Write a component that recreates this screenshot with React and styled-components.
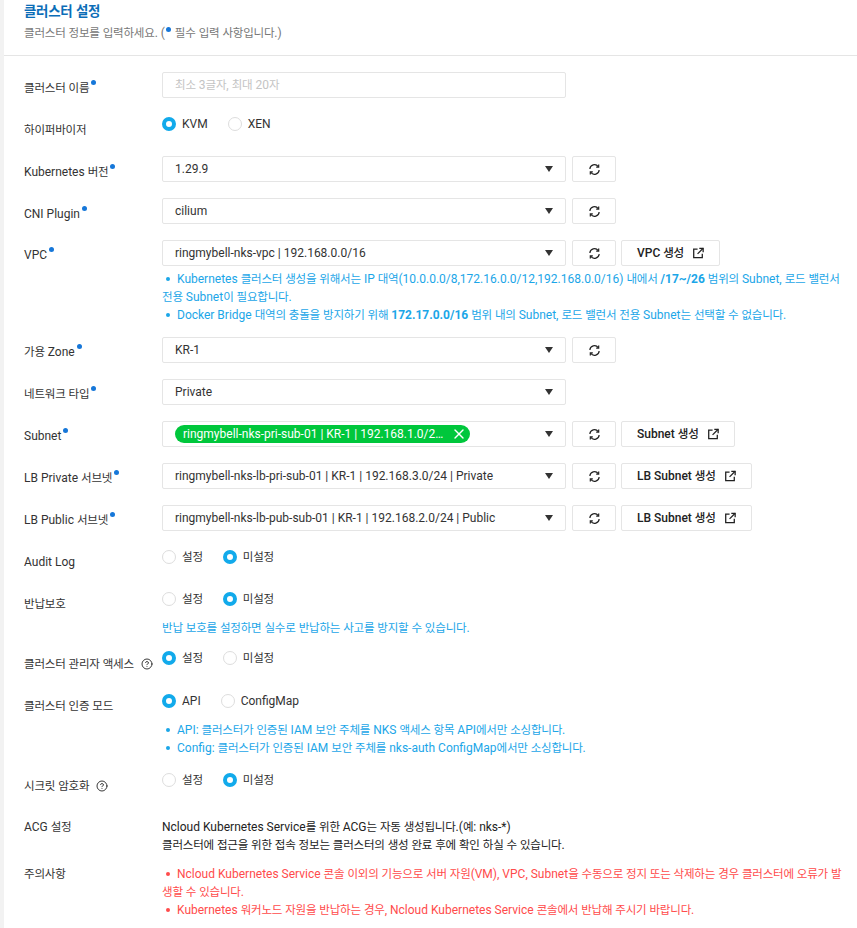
import styled, { createGlobalStyle } from "styled-components";
import { CircleHelp, X } from "lucide-react";

const GlobalStyle = createGlobalStyle`
  html, body {
    margin: 0;
    height: 928px;
    overflow: hidden;
    background: #f2f2f2;
  }
  * {
    box-sizing: border-box;
  }
`;

const Panel = styled.div`
  margin-left: 4px;
  min-height: 928px;
  background: #fff;
  color: #333;
  font: 12px/18px Roboto, "Noto Sans CJK KR", sans-serif;
`;
const Header = styled.div`
  height: 56px;
  padding: 2px 20px 0;
  border-bottom: 1px solid #e5e5e5;
`;
const Title = styled.h2`
  margin: 0;
  height: 18px;
  font-size: 14px;
  line-height: 18px;
  font-weight: 700;
  color: #0b6db7;
`;
const Subtitle = styled.p`
  margin: 4px 0 0;
  color: #777;
`;
const HeaderDot = styled.i`
  display: inline-block;
  width: 5px;
  height: 5px;
  margin: 0 1px 5px -2px;
  border-radius: 50%;
  background: #1677d9;
`;
// hangul runs in the reference are narrower than the latin text around them
const Ko = styled.span`
  font-size: 0.96em;
  letter-spacing: -0.018em;
`;
const Form = styled.div`
  padding: 16px 0 0 20px;
`;
const Row = styled.div`
  display: grid;
  grid-template-columns: 138px 1fr;
  min-height: 26px;
  margin-bottom: ${(p) => p.$gap ?? 16}px;
`;
const Label = styled.div`
  display: flex;
  align-items: flex-start;
  padding-top: ${(p) => (p.$raised ? 6 : 7)}px;
  white-space: nowrap;
`;
const Required = styled.i`
  flex: none;
  width: 5px;
  height: 5px;
  margin: 1px 0 0 2px;
  border-radius: 50%;
  background: #1677d9;
`;
const HelpIcon = styled(CircleHelp)`
  flex: none;
  margin: 3px 0 0 7px;
  color: #222;
`;
const Controls = styled.div`
  display: flex;
  gap: 6px;
`;
const Field = styled.div`
  flex: none;
  position: relative;
  display: flex;
  align-items: center;
  width: 404px;
  height: 26px;
  padding: 0 12px;
  border: 1px solid #e5e5e5;
  border-radius: 2px;
  color: ${(p) => (p.$placeholder ? "#c4c4c4" : "#333")};
  white-space: nowrap;
`;
const Caret = styled.i`
  position: absolute;
  right: 12px;
  top: 9px;
  border-style: solid;
  border-width: 6px 4px 0;
  border-color: #333 transparent transparent;
`;
const Tag = styled.span`
  display: flex;
  align-items: center;
  width: 295px;
  height: 18px;
  padding: 0 3px 0 8px;
  border-radius: 9px;
  background: #00c73c;
  color: #fff;
`;
const TagText = styled.span`
  width: 263px;
  margin-right: 5px;
  overflow: hidden;
  text-overflow: ellipsis;
`;
const Button = styled.button`
  flex: none;
  display: flex;
  align-items: center;
  justify-content: ${(p) => (p.$icon ? "center" : "space-between")};
  width: ${(p) => p.$width}px;
  height: 26px;
  padding: 0 ${(p) => (p.$icon ? 0 : 15)}px;
  margin-left: ${(p) => (p.$icon ? 0 : -1)}px;
  border: 1px solid #e5e5e5;
  border-radius: 2px;
  background: #fff;
  color: #222;
  font: 500 12px/18px Roboto, "Noto Sans CJK KR", sans-serif;
`;
const Radios = styled.div`
  display: flex;
  align-items: center;
  height: 20px;
  gap: 20px;
`;
const RadioItem = styled.span`
  display: flex;
  align-items: center;
  gap: 6px;
`;
const RadioMark = styled.i`
  width: 14px;
  height: 14px;
  border-radius: 50%;
  background: #fff;
  border: ${(p) => (p.$on ? "4.5px solid #12aaeb" : "1px solid #ddd")};
`;
const Notes = styled.ul`
  max-width: 682px;
  margin: ${(p) => p.$top ?? 4}px 0 0;
  padding: 0;
  list-style: none;
  color: ${(p) => (p.$danger ? "#ff4b4b" : "#1ba6e8")};

  li::before {
    content: "";
    display: inline-block;
    width: 4px;
    height: 4px;
    margin: 0 7px 2px 4px;
    border-radius: 50%;
    background: currentColor;
  }
  b {
    font-weight: 700;
  }
`;
const Note = styled.p`
  margin: 10px 0 0;
  color: #1ba6e8;
`;
const Plain = styled.p`
  margin: 0;
  padding-top: 7px;
  color: #222;
`;

const ko = (text) =>
  text.split(/([\uac00-\ud7a3]+)/).map((part, i) => (i % 2 ? <Ko key={i}>{part}</Ko> : part));

const RefreshIcon = () => (
  <svg width="13" height="13" viewBox="0 0 14 14" fill="none" stroke="#222" strokeWidth="1.3">
    <path d="M2 6.5A5 5 0 0 1 11 3.8" />
    <path d="M11.5 1.6V4.4H8.8" />
    <path d="M12 7.5A5 5 0 0 1 3 10.2" />
    <path d="M2.5 12.4V9.6H5.2" />
  </svg>
);

const LinkIcon = () => (
  <svg width="12" height="12" viewBox="0 0 14 14" fill="none" stroke="#222" strokeWidth="1.5">
    <path d="M6.5 2.5H2V12.5H12V8" />
    <path d="M8.5 1.5H13V6" />
    <path d="M13 1.5L6.5 8" />
  </svg>
);

const RefreshButton = () => (
  <Button $icon $width={44}>
    <RefreshIcon />
  </Button>
);

const CreateButton = ({ width, children }) => (
  <Button $width={width}>
    <span>{ko(children)}</span>
    <LinkIcon />
  </Button>
);

const RadioGroup = ({ options, value }) => (
  <Radios>
    {options.map((option) => (
      <RadioItem key={option}>
        <RadioMark $on={option === value} />
        <span>{ko(option)}</span>
      </RadioItem>
    ))}
  </Radios>
);

const SelectRow = ({ label, value, button, width, raised, refresh = true }) => (
  <Row>
    <Label $raised={raised}>
      <span>{ko(label)}</span>
      <Required />
    </Label>
    <Controls>
      <Field>
        {value}
        <Caret />
      </Field>
      {refresh && <RefreshButton />}
      {button && <CreateButton width={width}>{button}</CreateButton>}
    </Controls>
  </Row>
);

const OPTIONS = ["설정", "미설정"];

const App = () => (
  <>
    <GlobalStyle />
    <Panel>
      <Header>
        <Title>{ko("클러스터 설정")}</Title>
        <Subtitle>
          {ko("클러스터 정보를 입력하세요. (")} <HeaderDot /> {ko("필수 입력 사항입니다.)")}
        </Subtitle>
      </Header>
      <Form>
        <Row>
          <Label>
            <span>{ko("클러스터 이름")}</span>
            <Required />
          </Label>
          <Controls>
            <Field $placeholder>
              <span>{ko("최소 3글자, 최대 20자")}</span>
            </Field>
          </Controls>
        </Row>
        <Row>
          <Label>
            <span>{ko("하이퍼바이저")}</span>
          </Label>
          <RadioGroup options={["KVM", "XEN"]} value="KVM" />
        </Row>
        <SelectRow label="Kubernetes 버전" value="1.29.9" />
        <SelectRow label="CNI Plugin" value="cilium" />
        <Row $gap={13}>
          <Label $raised>
            VPC
            <Required />
          </Label>
          <div>
            <Controls>
              <Field>
                ringmybell-nks-vpc | 192.168.0.0/16
                <Caret />
              </Field>
              <RefreshButton />
              <CreateButton width={99}>VPC 생성</CreateButton>
            </Controls>
            <Notes>
              <li>
                {ko("Kubernetes 클러스터 생성을 위해서는 IP 대역(10.0.0.0/8,172.16.0.0/12,192.168.0.0/16) 내에서 ")}
                <b>/17~/26</b>
                {ko(" 범위의 Subnet, 로드 밸런서 전용 Subnet이 필요합니다.")}
              </li>
              <li>
                {ko("Docker Bridge 대역의 충돌을 방지하기 위해 ")}
                <b>172.17.0.0/16</b>
                {ko(" 범위 내의 Subnet, 로드 밸런서 전용 Subnet는 선택할 수 없습니다.")}
              </li>
            </Notes>
          </div>
        </Row>
        <SelectRow raised label="가용 Zone" value="KR-1" />
        <SelectRow raised label="네트워크 타입" value="Private" refresh={false} />
        <Row>
          <Label $raised>
            Subnet
            <Required />
          </Label>
          <Controls>
            <Field>
              <Tag>
                <TagText>ringmybell-nks-pri-sub-01 | KR-1 | 192.168.1.0/24 | Private</TagText>
                <X size={16} strokeWidth={2} />
              </Tag>
              <Caret />
            </Field>
            <RefreshButton />
            <CreateButton width={114}>Subnet 생성</CreateButton>
          </Controls>
        </Row>
        <SelectRow raised label="LB Private 서브넷" value="ringmybell-nks-lb-pri-sub-01 | KR-1 | 192.168.3.0/24 | Private" button="LB Subnet 생성" width={131} />
        <SelectRow raised label="LB Public 서브넷" value="ringmybell-nks-lb-pub-sub-01 | KR-1 | 192.168.2.0/24 | Public" button="LB Subnet 생성" width={131} />
        <Row>
          <Label $raised>Audit Log</Label>
          <RadioGroup options={OPTIONS} value="미설정" />
        </Row>
        <Row $gap={11}>
          <Label $raised>
            <span>{ko("반납보호")}</span>
          </Label>
          <div>
            <RadioGroup options={OPTIONS} value="미설정" />
            <Note>{ko("반납 보호를 설정하면 실수로 반납하는 사고를 방지할 수 있습니다.")}</Note>
          </div>
        </Row>
        <Row $gap={17}>
          <Label>
            <span>{ko("클러스터 관리자 액세스")}</span>
            <HelpIcon size={12} strokeWidth={1.8} />
          </Label>
          <RadioGroup options={OPTIONS} value="설정" />
        </Row>
        <Row $gap={13}>
          <Label $raised>
            <span>{ko("클러스터 인증 모드")}</span>
          </Label>
          <div>
            <RadioGroup options={["API", "ConfigMap"]} value="API" />
            <Notes $top={10}>
              <li>{ko("API: 클러스터가 인증된 IAM 보안 주체를 NKS 액세스 항목 API에서만 소싱합니다.")}</li>
              <li>{ko("Config: 클러스터가 인증된 IAM 보안 주체를 nks-auth ConfigMap에서만 소싱합니다.")}</li>
            </Notes>
          </div>
        </Row>
        <Row $gap={15}>
          <Label>
            <span>{ko("시크릿 암호화")}</span>
            <HelpIcon size={12} strokeWidth={1.8} />
          </Label>
          <RadioGroup options={OPTIONS} value="미설정" />
        </Row>
        <Row $gap={4}>
          <Label>
            <span>{ko("ACG 설정")}</span>
          </Label>
          <Plain>
            {ko("Ncloud Kubernetes Service를 위한 ACG는 자동 생성됩니다.(예: nks-*)")}
            <br />
            {ko("클러스터에 접근을 위한 접속 정보는 클러스터의 생성 완료 후에 확인 하실 수 있습니다.")}
          </Plain>
        </Row>
        <Row>
          <Label>
            <span>{ko("주의사항")}</span>
          </Label>
          <Notes $danger $top={7}>
            <li>{ko("Ncloud Kubernetes Service 콘솔 이외의 기능으로 서버 자원(VM), VPC, Subnet을 수동으로 정지 또는 삭제하는 경우 클러스터에 오류가 발생할 수 있습니다.")}</li>
            <li>{ko("Kubernetes 워커노드 자원을 반납하는 경우, Ncloud Kubernetes Service 콘솔에서 반납해 주시기 바랍니다.")}</li>
          </Notes>
        </Row>
      </Form>
    </Panel>
  </>
);

export default App;
